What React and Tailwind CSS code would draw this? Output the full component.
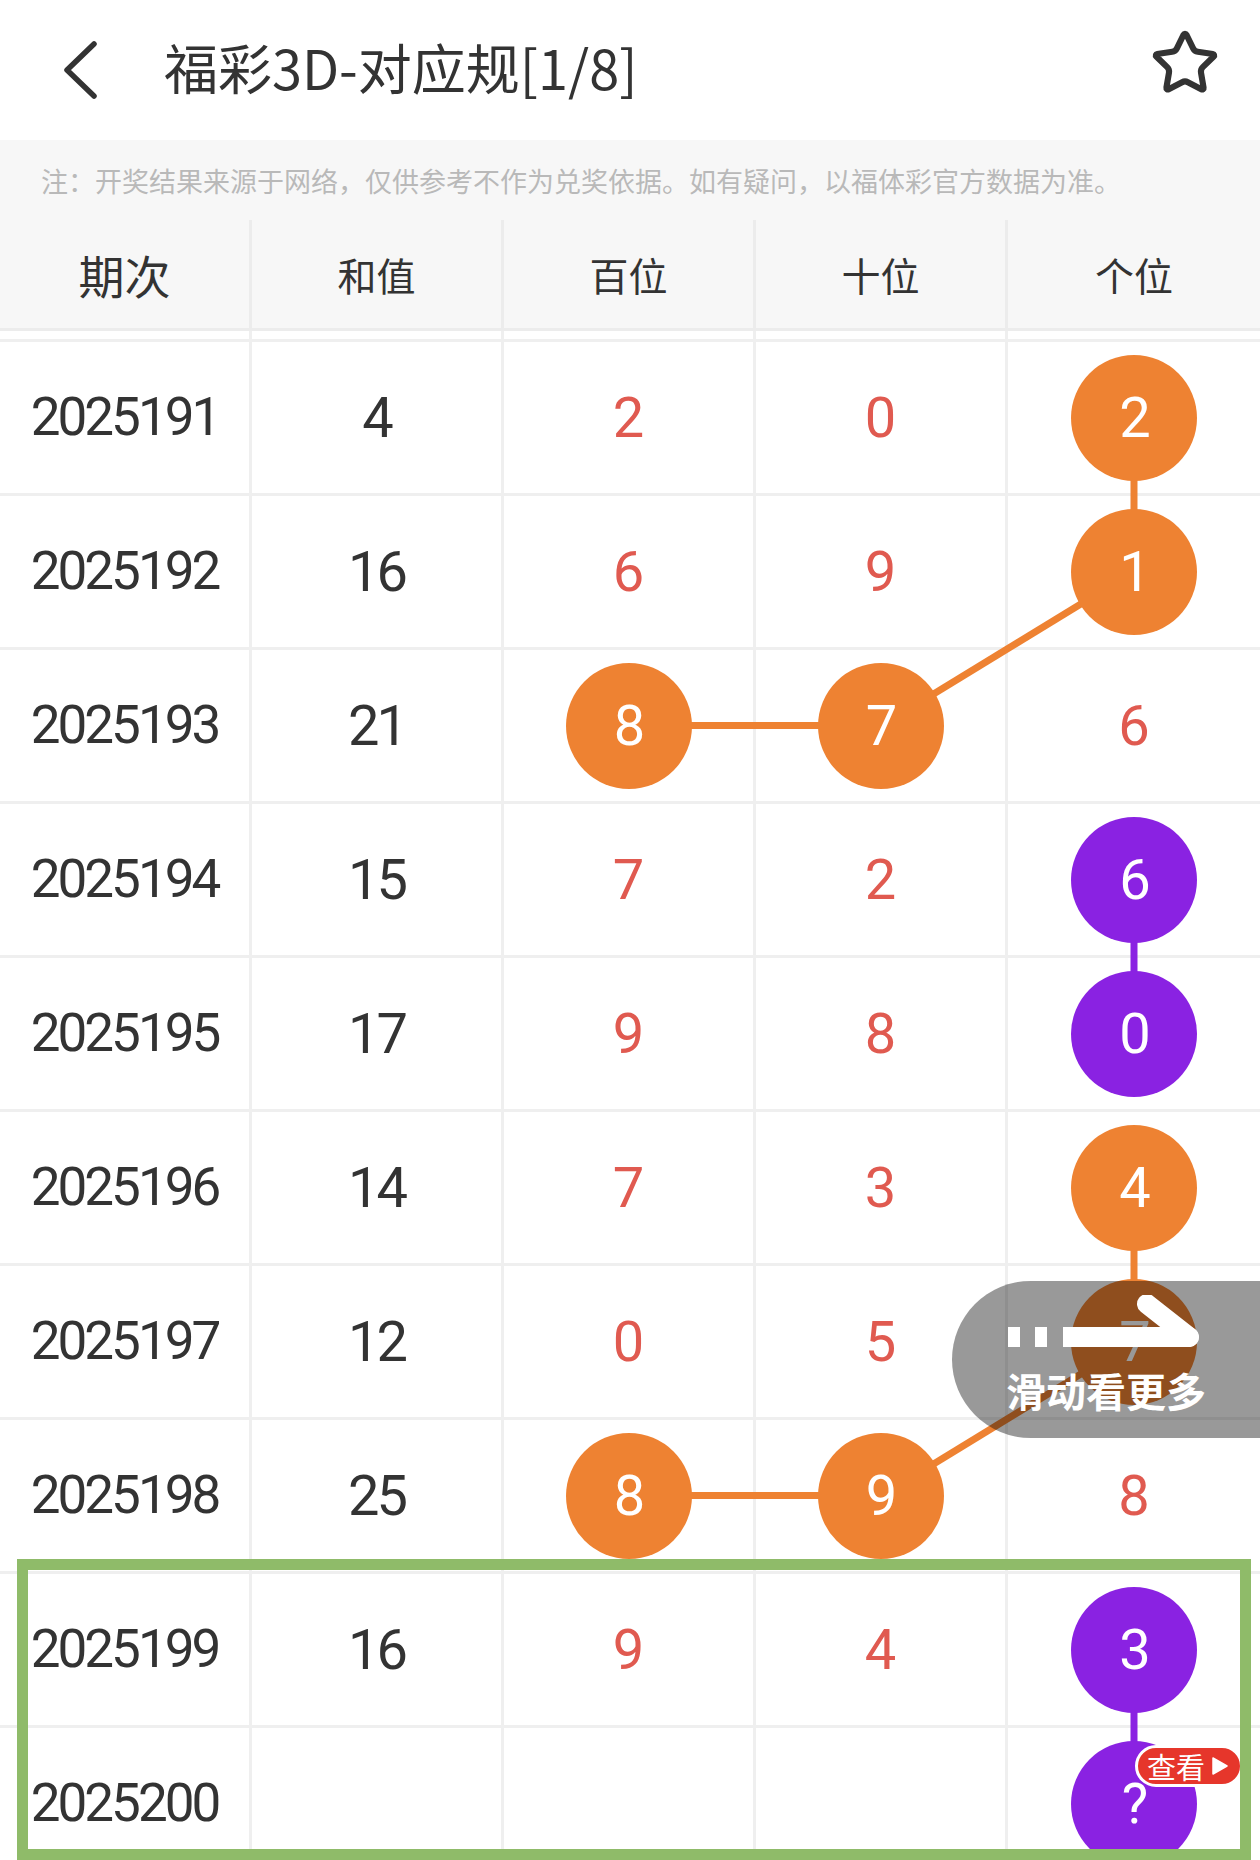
import React from 'react';
import { Star } from 'lucide-react';

const cjk = { fontFamily: '"Noto Sans CJK SC", "Noto Sans", sans-serif' };
const num = { fontFamily: 'Roboto, "Noto Sans CJK SC", sans-serif' };

const ORANGE = '#ee8232';
const PURPLE = '#8a22e2';

// each row: period, sum, then [value, ball] for 百/十/个 (ball: null | 'o' | 'p')
const rows = [
  { id: '2025191', sum: '4', cells: [['2', null], ['0', null], ['2', 'o']] },
  { id: '2025192', sum: '16', cells: [['6', null], ['9', null], ['1', 'o']] },
  { id: '2025193', sum: '21', cells: [['8', 'o'], ['7', 'o'], ['6', null]] },
  { id: '2025194', sum: '15', cells: [['7', null], ['2', null], ['6', 'p']] },
  { id: '2025195', sum: '17', cells: [['9', null], ['8', null], ['0', 'p']] },
  { id: '2025196', sum: '14', cells: [['7', null], ['3', null], ['4', 'o']] },
  { id: '2025197', sum: '12', cells: [['0', null], ['5', null], ['7', 'o']] },
  { id: '2025198', sum: '25', cells: [['8', 'o'], ['9', 'o'], ['8', null]] },
  { id: '2025199', sum: '16', cells: [['9', null], ['4', null], ['3', 'p']] },
  { id: '2025200', sum: '', cells: [['', null], ['', null], ['?', 'p']] },
];

const ROW_H = 154;
const cx = (c) => 126 + 252 * c;
const cy = (r) => 78.5 + ROW_H * r;

// connectors between balls: [col, row] -> [col, row]
const links = [
  [4, 0, 4, 1, ORANGE],
  [4, 1, 3, 2, ORANGE],
  [3, 2, 2, 2, ORANGE],
  [4, 3, 4, 4, PURPLE],
  [4, 5, 4, 6, ORANGE],
  [4, 6, 3, 7, ORANGE],
  [3, 7, 2, 7, ORANGE],
  [4, 8, 4, 9, PURPLE],
];

const cellBorder = 'border-r-[3px] border-[#efefef]';

const Ball = ({ value, kind }) => (
  <div
    className={`relative z-10 w-[126px] h-[126px] rounded-full flex items-center justify-center text-white text-[56px] leading-none tracking-[-2px] ${kind === 'o' ? 'bg-[#ee8232]' : 'bg-[#8a22e2]'}`}
    style={num}
  >
    {value}
  </div>
);

const App = () => {
  return (
    <div className="relative w-[1260px] h-[1860px] overflow-hidden bg-white" style={cjk}>
      {/* Nav bar */}
      <div className="flex items-center h-[140px] pl-[60px] pr-[40px]">
        <svg width="40" height="60" viewBox="0 0 40 60" className="shrink-0">
          <polyline points="34,4 7,30 34,56" fill="none" stroke="#333" strokeWidth="5.5" strokeLinecap="round" strokeLinejoin="round" />
        </svg>
        <h1 className="ml-[64px] -mt-[6px] text-[54px] leading-none text-[#333]" style={cjk}>福彩3D-对应规[1/8]</h1>
        <Star className="ml-auto -mt-[14px]" size={70} strokeWidth={2.1} color="#333" />
      </div>

      {/* Note */}
      <div className="h-[80px] bg-[#f7f7f7] flex items-center pl-[41px] text-[27px] text-[#b9b9b9] leading-none">
        注：开奖结果来源于网络，仅供参考不作为兑奖依据。如有疑问，以福体彩官方数据为准。
      </div>

      {/* Header row */}
      <div className="grid grid-cols-5 h-[111px] bg-[#f7f7f7] border-b-[3px] border-[#ececec] text-[#333]">
        {['期次', '和值', '百位', '十位', '个位'].map((h, i) => (
          <div
            key={h}
            className={`flex items-center justify-center leading-none ${i === 0 ? 'text-[46px]' : 'text-[39px]'} ${i < 4 ? 'border-r-[3px] border-[#ececec]' : ''}`}
          >
            {h}
          </div>
        ))}
      </div>

      {/* sliver of the previous row */}
      <div className="grid grid-cols-5 h-[8px]">
        {[0, 1, 2, 3, 4].map((i) => (
          <div key={i} className={i < 4 ? cellBorder : ''} />
        ))}
      </div>

      {/* Rows */}
      <div className="relative">
        {rows.map((r) => (
          <div key={r.id} className="grid grid-cols-5 h-[154px] border-t-[3px] border-[#efefef]">
            <div className={`flex items-center justify-center text-[53px] leading-none text-[#333] tracking-[-3px] ${cellBorder}`} style={num}>
              {r.id}
            </div>
            <div className={`flex items-center justify-center text-[56px] leading-none text-[#333] tracking-[-3px] ${cellBorder}`} style={num}>
              {r.sum}
            </div>
            {r.cells.map(([v, kind], i) => (
              <div key={i} className={`flex items-center justify-center ${i < 2 ? cellBorder : ''}`}>
                {kind ? (
                  <Ball value={v} kind={kind} />
                ) : (
                  <span className="text-[56px] leading-none text-[#e05a50]" style={num}>{v}</span>
                )}
              </div>
            ))}
          </div>
        ))}

        <svg className="absolute left-0 top-0 pointer-events-none" width="1260" height="1540" viewBox="0 0 1260 1540">
          {links.map(([c1, r1, c2, r2, color], i) => (
            <line key={i} x1={cx(c1)} y1={cy(r1)} x2={cx(c2)} y2={cy(r2)} stroke={color} strokeWidth="7" />
          ))}
        </svg>
      </div>

      {/* Swipe hint */}
      <div className="absolute left-[952px] top-[1281px] w-[340px] h-[157px] rounded-l-[79px] bg-black/40 z-20 flex flex-col pl-[52px] pt-[14px]">
        <svg width="200" height="56" viewBox="0 0 200 56">
          <rect x="4" y="32" width="12" height="20" fill="#fff" />
          <rect x="31" y="32" width="12" height="20" fill="#fff" />
          <rect x="59" y="32" width="124" height="20" fill="#fff" />
          <line x1="143" y1="9" x2="185" y2="42" stroke="#fff" strokeWidth="20" strokeLinecap="round" />
          <line x1="170" y1="42" x2="185" y2="42" stroke="#fff" strokeWidth="20" strokeLinecap="round" />
        </svg>
        <div className="mt-[16px] ml-[2px] text-[40px] leading-[46px] font-bold text-white" style={cjk}>滑动看更多</div>
      </div>

      {/* 查看 badge */}
      <div className="absolute left-[1135px] top-[1745px] h-[42px] w-[108px] rounded-full bg-[#e6362b] border-[3px] border-white z-20 flex items-center pl-[9px] text-white">
        <span className="text-[29px] leading-none" style={cjk}>查看</span>
        <svg className="ml-[7px]" width="16" height="18" viewBox="0 0 16 18">
          <path d="M1 1 L15 9 L1 17 Z" fill="#fff" strokeLinejoin="round" stroke="#fff" strokeWidth="1.5" />
        </svg>
      </div>

      {/* highlight frame */}
      <div className="absolute left-[17px] top-[1559px] w-[1234px] h-[301px] border-[11px] border-[#8fbb69] z-30 pointer-events-none" />
    </div>
  );
};

export default App;
